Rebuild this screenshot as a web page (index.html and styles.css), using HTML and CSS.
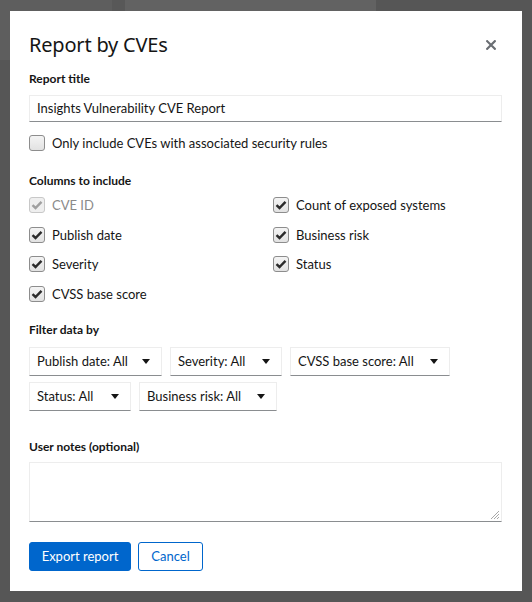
FILE: index.html
```html
<!DOCTYPE html>
<html lang="en">
<head>
<meta charset="utf-8">
<title>Report by CVEs</title>
<link rel="stylesheet" href="styles.css">
</head>
<body>
<div class="page">
  <div class="page-side"></div>
  <div class="page-rail"></div>
  <div class="page-card"></div>
</div>
<div class="modal" role="dialog" aria-labelledby="title">
  <header class="modal-header">
    <h1 id="title" class="modal-title">Report by CVEs</h1>
    <button class="close" aria-label="Close">
      <svg viewBox="0 0 10 10" width="10" height="10"><path d="M1.2 1.2 L8.8 8.8 M8.8 1.2 L1.2 8.8" stroke="#6a6e73" stroke-width="2.2" stroke-linecap="square"/></svg>
    </button>
  </header>
  <div class="modal-body">
    <label class="label label-title">Report title</label>
    <div class="input">Insights Vulnerability CVE Report</div>
    <div class="check-row check-only">
      <span class="box"></span>
      <span>Only include CVEs with associated security rules</span>
    </div>

    <div class="label label-columns">Columns to include</div>
    <div class="columns">
      <div class="check-row disabled"><span class="box checked"><svg viewBox="0 0 12 10" width="12" height="10"><path d="M1.5 5.2 L4.5 8 L10.5 1.8" fill="none" stroke="currentColor" stroke-width="2.4"/></svg></span><span>CVE ID</span></div>
      <div class="check-row"><span class="box checked"><svg viewBox="0 0 12 10" width="12" height="10"><path d="M1.5 5.2 L4.5 8 L10.5 1.8" fill="none" stroke="currentColor" stroke-width="2.4"/></svg></span><span>Count of exposed systems</span></div>
      <div class="check-row"><span class="box checked"><svg viewBox="0 0 12 10" width="12" height="10"><path d="M1.5 5.2 L4.5 8 L10.5 1.8" fill="none" stroke="currentColor" stroke-width="2.4"/></svg></span><span>Publish date</span></div>
      <div class="check-row"><span class="box checked"><svg viewBox="0 0 12 10" width="12" height="10"><path d="M1.5 5.2 L4.5 8 L10.5 1.8" fill="none" stroke="currentColor" stroke-width="2.4"/></svg></span><span>Business risk</span></div>
      <div class="check-row"><span class="box checked"><svg viewBox="0 0 12 10" width="12" height="10"><path d="M1.5 5.2 L4.5 8 L10.5 1.8" fill="none" stroke="currentColor" stroke-width="2.4"/></svg></span><span>Severity</span></div>
      <div class="check-row"><span class="box checked"><svg viewBox="0 0 12 10" width="12" height="10"><path d="M1.5 5.2 L4.5 8 L10.5 1.8" fill="none" stroke="currentColor" stroke-width="2.4"/></svg></span><span>Status</span></div>
      <div class="check-row"><span class="box checked"><svg viewBox="0 0 12 10" width="12" height="10"><path d="M1.5 5.2 L4.5 8 L10.5 1.8" fill="none" stroke="currentColor" stroke-width="2.4"/></svg></span><span>CVSS base score</span></div>
    </div>

    <div class="label label-filter">Filter data by</div>
    <div class="filters">
      <div class="select w-publish"><span>Publish date: All</span><span class="caret"></span></div>
      <div class="select w-severity"><span>Severity: All</span><span class="caret"></span></div>
      <div class="select w-cvss"><span>CVSS base score: All</span><span class="caret"></span></div>
    </div>
    <div class="filters filters-2">
      <div class="select w-status"><span>Status: All</span><span class="caret"></span></div>
      <div class="select w-risk"><span>Business risk: All</span><span class="caret"></span></div>
    </div>

    <div class="label label-notes">User notes (optional)</div>
    <div class="textarea">
      <svg class="grip" viewBox="0 0 12 12" width="12" height="12"><path d="M11 3 L3 11 M11 6 L6 11 M11 9 L9 11" stroke="#a8a8a8" stroke-width="1"/></svg>
    </div>

    <div class="actions">
      <button class="btn btn-primary">Export report</button>
      <button class="btn btn-link">Cancel</button>
    </div>
  </div>
</div>
</body>
</html>
```
FILE: styles.css
```css
* { box-sizing: border-box; }
html, body { margin: 0; padding: 0; }
body {
  width: 532px;
  height: 602px;
  overflow: hidden;
  background: #565656;
  font-family: "Lato", "Liberation Sans", sans-serif;
  color: #151515;
}
.page {
  display: flex;
  height: 60px;
}
.page-side { width: 112px; background: #5e5e5e; }
.page-rail { width: 13px; background: #585858; }
.page-card { width: 251px; background: #626262; }

.modal {
  position: fixed;
  left: 10px;
  top: 11px;
  width: 512px;
  height: 580px;
  background: #fff;
  padding: 0 20px 0 19px;
}
.modal-header {
  display: flex;
  justify-content: space-between;
  align-items: center;
  padding-top: 22px;
  height: 46px;
}
.modal-title {
  margin: 0;
  font-family: "Noto Sans", sans-serif;
  font-weight: 400;
  font-size: 20px;
  line-height: 24px;
  letter-spacing: -0.2px;
}
.close {
  border: 0;
  background: none;
  padding: 0;
  margin-right: 6px;
  width: 10px;
  height: 10px;
  display: flex;
}
.modal-body {
  display: flex;
  flex-direction: column;
}
.label {
  font-size: 12px;
  font-weight: 700;
  line-height: 16px;
}
.label-title { margin-top: 14px; }
.input {
  margin-top: 8px;
  height: 27px;
  border: 1px solid #ededed;
  border-bottom-color: #8a8d90;
  padding: 0 7px;
  font-size: 13px;
  line-height: 25px;
}
.check-row {
  display: flex;
  align-items: center;
  gap: 7px;
  font-size: 13px;
  height: 20px;
}
.check-only { margin-top: 11px; }
.box {
  width: 16px;
  height: 16px;
  flex: none;
  border: 1px solid #8d8d8d;
  border-radius: 3px;
  background: linear-gradient(#f4f4f4, #e2e2e2);
  display: flex;
  align-items: center;
  justify-content: center;
  color: #2b2b2b;
}
.disabled { color: #8a8a8a; }
.disabled .box { border-color: #c8c8c8; background: #efefef; color: #a0a0a0; }
.label-columns { margin-top: 20px; }
.columns {
  margin-top: 6px;
  display: grid;
  grid-template-columns: 244px 1fr;
  grid-auto-rows: 20px;
  row-gap: 9.5px;
}
.label-filter { margin-top: 18px; }
.filters {
  margin-top: 9px;
  display: flex;
  gap: 8px;
}
.filters-2 { margin-top: 6px; }
.select {
  height: 29px;
  border: 1px solid #ededed;
  border-bottom-color: #8a8d90;
  display: flex;
  align-items: center;
  justify-content: space-between;
  padding: 0 11px 0 7px;
  font-size: 13px;
}
.caret {
  width: 0;
  height: 0;
  border-left: 4.5px solid transparent;
  border-right: 4.5px solid transparent;
  border-top: 5px solid #151515;
}
.w-publish { width: 133px; }
.w-severity { width: 112px; }
.w-cvss { width: 160px; }
.w-status { width: 102px; }
.w-risk { width: 138px; }
.label-notes { margin-top: 28px; }
.textarea {
  margin-top: 7px;
  height: 60px;
  border: 1px solid #ededed;
  border-bottom-color: #8a8d90;
  position: relative;
}
.grip { position: absolute; right: 1px; bottom: 1px; }
.actions {
  margin-top: 20px;
  display: flex;
  gap: 7px;
}
.btn {
  height: 29px;
  font-family: "Lato", "Liberation Sans", sans-serif;
  font-size: 13px;
  border-radius: 3px;
  padding: 0;
  white-space: nowrap;
}
.btn-primary {
  width: 102px;
  background: #0066cc;
  border: 1px solid #0066cc;
  color: #fff;
}
.btn-link {
  width: 65px;
  background: #fff;
  border: 1px solid #0066cc;
  color: #0066cc;
}
```
